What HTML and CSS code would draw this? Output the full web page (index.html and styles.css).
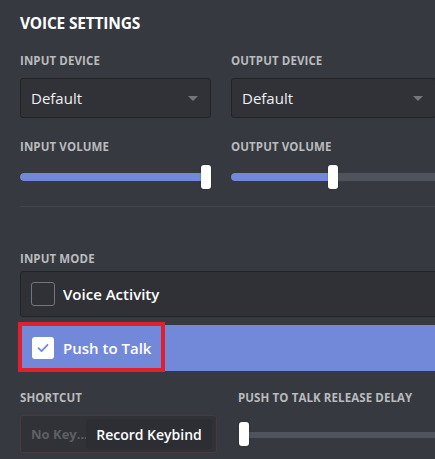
FILE: index.html
```html
<!DOCTYPE html>
<html>
<head>
<meta charset="utf-8">
<link rel="stylesheet" href="styles.css">
</head>
<body>
<div class="page">
  <h2 class="title">VOICE SETTINGS</h2>

  <div class="cols top">
    <div class="field">
      <div class="label">INPUT DEVICE</div>
      <div class="select"><span>Default</span><span class="caret"></span></div>
    </div>
    <div class="field">
      <div class="label">OUTPUT DEVICE</div>
      <div class="select"><span>Default</span><span class="caret"></span></div>
    </div>
  </div>

  <div class="cols vol">
    <div class="field">
      <div class="label">INPUT VOLUME</div>
      <div class="slider"><div class="track"><div class="fill" style="width:186px"></div></div><div class="thumb" style="left:181px"></div></div>
    </div>
    <div class="field">
      <div class="label">OUTPUT VOLUME</div>
      <div class="slider"><div class="track"><div class="fill" style="width:102px"></div></div><div class="thumb" style="left:97px"></div></div>
    </div>
  </div>

  <div class="divider"></div>

  <div class="label mode-label">INPUT MODE</div>
  <div class="radio">
    <span class="box"></span><span class="radio-text">Voice Activity</span>
  </div>
  <div class="radio selected">
    <span class="box checked"><svg width="14" height="14" viewBox="0 0 14 14"><path d="M2.5 7.2 L5.6 10.2 L11.5 3.8" fill="none" stroke="#7289da" stroke-width="1.8" stroke-linecap="round" stroke-linejoin="round"/></svg></span><span class="radio-text">Push to Talk</span>
    <div class="highlight"></div>
  </div>

  <div class="cols bottom">
    <div class="field">
      <div class="label">SHORTCUT</div>
      <div class="keybind">
        <span class="nokey">No Key...</span>
        <span class="record">Record Keybind</span>
      </div>
    </div>
    <div class="field">
      <div class="label">PUSH TO TALK RELEASE DELAY</div>
      <div class="slider delay"><div class="track grey"></div><div class="thumb" style="left:1px"></div></div>
    </div>
  </div>
</div>
</body>
</html>
```

FILE: styles.css
```css
html, body {
  margin: 0;
  padding: 0;
  background: #36393f;
  overflow: hidden;
}
body {
  font-family: "Open Sans", "Noto Sans", sans-serif;
  color: #fff;
}
.page {
  width: 460px;
  padding: 13px 0 0 20px;
  box-sizing: border-box;
}
.title {
  margin: 0;
  font-size: 15.5px;
  font-weight: 700;
  line-height: 20px;
  letter-spacing: -0.2px;
}
.cols {
  display: grid;
  grid-template-columns: 191px 205px;
  column-gap: 20px;
}
.top {
  margin-top: 21px;
}
.label {
  font-size: 11.5px;
  font-weight: 700;
  color: #b9bbbe;
  line-height: 14px;
  letter-spacing: 0.1px;
  white-space: nowrap;
}
.select {
  margin-top: 10px;
  height: 40px;
  box-sizing: border-box;
  border: 1px solid #222327;
  border-radius: 3px;
  background: #303238;
  display: flex;
  align-items: center;
  justify-content: space-between;
  padding: 0 12px 0 10px;
  font-size: 15px;
  color: #f0f0f0;
}
.caret {
  width: 0;
  height: 0;
  border-left: 5px solid transparent;
  border-right: 5px solid transparent;
  border-top: 5px solid #72767d;
  margin-top: 1px;
}
.vol {
  margin-top: 22px;
}
.vol .field:last-child .track {
  right: -20px;
}
.slider {
  position: relative;
  height: 24px;
  margin-top: 11px;
}
.track {
  position: absolute;
  left: 0;
  right: 0;
  top: 8px;
  height: 8px;
  border-radius: 4px;
  background: #4f545c;
  overflow: hidden;
}
.fill {
  height: 100%;
  background: #7289da;
  border-radius: 4px 0 0 4px;
}
.thumb {
  position: absolute;
  top: 0;
  width: 10px;
  height: 24px;
  background: #fff;
  border-radius: 3px;
  box-shadow: 0 0 2px rgba(0,0,0,0.3);
}
.divider {
  margin-top: 17px;
  height: 1px;
  background: #43464c;
}
.mode-label {
  margin-top: 45px;
}
.radio {
  position: relative;
  margin-top: 5px;
  height: 46px;
  box-sizing: border-box;
  border: 1px solid #222327;
  border-radius: 3px;
  background: #2f3136;
  display: flex;
  align-items: center;
  padding-left: 10px;
}
.radio.selected {
  margin-top: 8px;
  background: #7289da;
  border-color: #7289da;
  border-radius: 3px 0 0 3px;
}
.box {
  width: 24px;
  height: 24px;
  box-sizing: border-box;
  border: 1px solid #72767d;
  border-radius: 3px;
  display: flex;
  align-items: center;
  justify-content: center;
}
.box.checked {
  width: 22px;
  height: 22px;
  background: #fff;
  border: none;
  margin-left: 1px;
  margin-right: 1px;
}
.radio-text {
  margin-left: 8px;
  font-size: 15px;
  font-weight: 600;
  color: #fff;
}
.highlight {
  position: absolute;
  left: -3px;
  top: -4px;
  width: 147px;
  height: 50px;
  box-sizing: border-box;
  border: 4px solid #e0202d;
}
.bottom {
  margin-top: 20px;
  grid-template-columns: 197px 1fr;
  column-gap: 21px;
}
.keybind {
  margin-top: 10px;
  width: 197px;
  height: 38px;
  box-sizing: border-box;
  border: 1px solid #4a3a40;
  border-radius: 3px;
  background: #303237;
  display: flex;
  align-items: center;
  padding: 0 4px 0 10px;
}
.nokey {
  font-size: 13px;
  font-weight: 700;
  color: #5d6066;
  width: 55px;
  white-space: nowrap;
}
.record {
  flex: 1;
  height: 30px;
  background: #2c2e33;
  border-radius: 3px;
  display: flex;
  align-items: center;
  justify-content: center;
  font-size: 14px;
  font-weight: 600;
  color: #fff;
}
.slider.delay {
  margin-top: 17px;
}
.track.grey {
  left: 2px;
  right: -20px;
  top: 10px;
  height: 6px;
  border-radius: 3px;
  background: #4f545c;
}
```
